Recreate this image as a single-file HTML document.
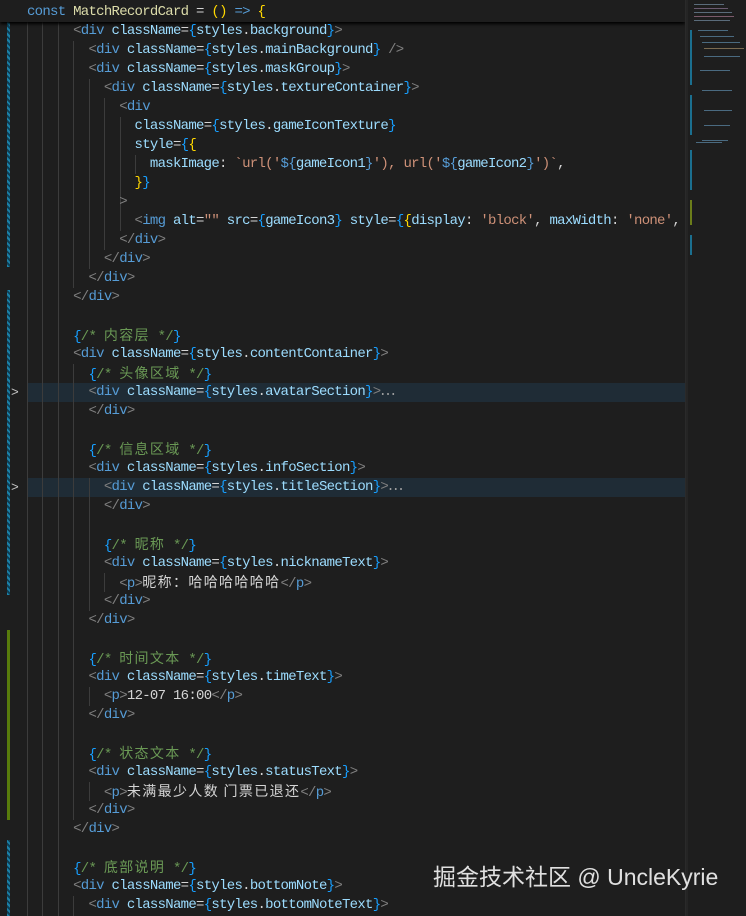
<!DOCTYPE html>
<html><head><meta charset="utf-8"><style>
html,body{margin:0;padding:0}
body{width:746px;height:916px;background:#1e1e1e;position:relative;overflow:hidden;font-family:"Liberation Mono","Noto Sans CJK SC",monospace;font-size:14px;letter-spacing:-0.72px;color:#d4d4d4}
.l{position:absolute;left:27px;height:19px;line-height:19px;white-space:pre}
.hl{position:absolute;left:27px;width:658px;height:19px;background:#1f2c36}
.g{position:absolute;width:1px;background:#3c3c3c}
.cj{letter-spacing:1.36px;font-family:"Noto Sans CJK SC",sans-serif;font-size:14px}
.k,.t{color:#569cd6}.p{color:#808080}.a,.v{color:#9cdcfe}.s{color:#ce9178}.c{color:#6a9955}
.b1{color:#ffd700}.b2{color:#da70d6}.b3{color:#179fff}.f{color:#dcdcaa}
.gut{position:absolute;left:7px;width:3px}
.blue{background:repeating-linear-gradient(45deg,#1b81a8 0 2px,#0e3f55 2px 4px)}
.green{background:#587c0c}
.chev{position:absolute;left:11px;color:#c5c5c5;font-size:13px;letter-spacing:0}
.mm{position:absolute;height:1px}
</style></head><body>
<div class="gut blue" style="top:22px;height:245px"></div>
<div class="gut blue" style="top:290px;height:305px"></div>
<div class="gut green" style="top:630px;height:190px"></div>
<div class="gut blue" style="top:840px;height:76px"></div>
<div class="hl" style="top:383px"></div>
<div class="hl" style="top:478px"></div>
<div class="chev" style="top:383px;line-height:19px">&gt;</div>
<div class="chev" style="top:478px;line-height:19px">&gt;</div>
<div class="g" style="left:27px;top:22px;height:894px"></div>
<div class="g" style="left:42px;top:22px;height:894px"></div>
<div class="g" style="left:58px;top:22px;height:894px"></div>
<div class="g" style="left:73px;top:41px;height:247px"></div>
<div class="g" style="left:73px;top:364px;height:456px"></div>
<div class="g" style="left:73px;top:896px;height:20px"></div>
<div class="g" style="left:89px;top:79px;height:190px"></div>
<div class="g" style="left:89px;top:478px;height:133px"></div>
<div class="g" style="left:89px;top:687px;height:19px"></div>
<div class="g" style="left:89px;top:782px;height:19px"></div>
<div class="g" style="left:104px;top:98px;height:152px"></div>
<div class="g" style="left:104px;top:573px;height:19px"></div>
<div class="g" style="left:120px;top:117px;height:114px"></div>
<div class="g" style="left:135px;top:155px;height:19px"></div>
<div style="position:absolute;left:0;top:0;width:685px;height:22px;background:#1e1e1e;box-shadow:0 2px 3px #000"></div>
<div class="l" style="top:2.5px"><span class="k">const</span> <span class="f">MatchRecordCard</span> = <span class="b1">()</span> <span class="k">=&gt;</span> <span class="b1">{</span></div>

<div class="l" style="top:21.5px">      <span class="p">&lt;</span><span class="t">div</span> <span class="a">className</span>=<span class="b3">{</span><span class="v">styles</span>.<span class="v">background</span><span class="b3">}</span><span class="p">&gt;</span></div>
<div class="l" style="top:40.5px">        <span class="p">&lt;</span><span class="t">div</span> <span class="a">className</span>=<span class="b3">{</span><span class="v">styles</span>.<span class="v">mainBackground</span><span class="b3">}</span> <span class="p">/&gt;</span></div>
<div class="l" style="top:59.5px">        <span class="p">&lt;</span><span class="t">div</span> <span class="a">className</span>=<span class="b3">{</span><span class="v">styles</span>.<span class="v">maskGroup</span><span class="b3">}</span><span class="p">&gt;</span></div>
<div class="l" style="top:78.5px">          <span class="p">&lt;</span><span class="t">div</span> <span class="a">className</span>=<span class="b3">{</span><span class="v">styles</span>.<span class="v">textureContainer</span><span class="b3">}</span><span class="p">&gt;</span></div>
<div class="l" style="top:97.5px">            <span class="p">&lt;</span><span class="t">div</span></div>
<div class="l" style="top:116.5px">              <span class="a">className</span>=<span class="b3">{</span><span class="v">styles</span>.<span class="v">gameIconTexture</span><span class="b3">}</span></div>
<div class="l" style="top:135.5px">              <span class="a">style</span>=<span class="b3">{</span><span class="b1">{</span></div>
<div class="l" style="top:154.5px">                <span class="v">maskImage</span>: <span class="s">`url('</span><span class="k">${</span><span class="v">gameIcon1</span><span class="k">}</span><span class="s">'), url('</span><span class="k">${</span><span class="v">gameIcon2</span><span class="k">}</span><span class="s">')`</span>,</div>
<div class="l" style="top:173.5px">              <span class="b1">}</span><span class="b3">}</span></div>
<div class="l" style="top:192.5px">            <span class="p">&gt;</span></div>
<div class="l" style="top:211.5px">              <span class="p">&lt;</span><span class="t">img</span> <span class="a">alt</span>=<span class="s">""</span> <span class="a">src</span>=<span class="b3">{</span><span class="v">gameIcon3</span><span class="b3">}</span> <span class="a">style</span>=<span class="b3">{</span><span class="b1">{</span><span class="v">display</span>: <span class="s">'block'</span>, <span class="v">maxWidth</span>: <span class="s">'none'</span>,</div>
<div class="l" style="top:230.5px">            <span class="p">&lt;/</span><span class="t">div</span><span class="p">&gt;</span></div>
<div class="l" style="top:249.5px">          <span class="p">&lt;/</span><span class="t">div</span><span class="p">&gt;</span></div>
<div class="l" style="top:268.5px">        <span class="p">&lt;/</span><span class="t">div</span><span class="p">&gt;</span></div>
<div class="l" style="top:287.5px">      <span class="p">&lt;/</span><span class="t">div</span><span class="p">&gt;</span></div>

<div class="l" style="top:325.5px">      <span class="b3">{</span><span class="c">/* <span class="cj">内容层</span> */</span><span class="b3">}</span></div>
<div class="l" style="top:344.5px">      <span class="p">&lt;</span><span class="t">div</span> <span class="a">className</span>=<span class="b3">{</span><span class="v">styles</span>.<span class="v">contentContainer</span><span class="b3">}</span><span class="p">&gt;</span></div>
<div class="l" style="top:363.5px">        <span class="b3">{</span><span class="c">/* <span class="cj">头像区域</span> */</span><span class="b3">}</span></div>
<div class="l" style="top:382.5px">        <span class="p">&lt;</span><span class="t">div</span> <span class="a">className</span>=<span class="b3">{</span><span class="v">styles</span>.<span class="v">avatarSection</span><span class="b3">}</span><span class="p">&gt;</span><span style="color:#aaa">⋯</span></div>
<div class="l" style="top:401.5px">        <span class="p">&lt;/</span><span class="t">div</span><span class="p">&gt;</span></div>

<div class="l" style="top:439.5px">        <span class="b3">{</span><span class="c">/* <span class="cj">信息区域</span> */</span><span class="b3">}</span></div>
<div class="l" style="top:458.5px">        <span class="p">&lt;</span><span class="t">div</span> <span class="a">className</span>=<span class="b3">{</span><span class="v">styles</span>.<span class="v">infoSection</span><span class="b3">}</span><span class="p">&gt;</span></div>
<div class="l" style="top:477.5px">          <span class="p">&lt;</span><span class="t">div</span> <span class="a">className</span>=<span class="b3">{</span><span class="v">styles</span>.<span class="v">titleSection</span><span class="b3">}</span><span class="p">&gt;</span><span style="color:#aaa">⋯</span></div>
<div class="l" style="top:496.5px">          <span class="p">&lt;/</span><span class="t">div</span><span class="p">&gt;</span></div>

<div class="l" style="top:534.5px">          <span class="b3">{</span><span class="c">/* <span class="cj">昵称</span> */</span><span class="b3">}</span></div>
<div class="l" style="top:553.5px">          <span class="p">&lt;</span><span class="t">div</span> <span class="a">className</span>=<span class="b3">{</span><span class="v">styles</span>.<span class="v">nicknameText</span><span class="b3">}</span><span class="p">&gt;</span></div>
<div class="l" style="top:572.5px">            <span class="p">&lt;</span><span class="t">p</span><span class="p">&gt;</span><span class="cj">昵称：哈哈哈哈哈哈</span><span class="p">&lt;/</span><span class="t">p</span><span class="p">&gt;</span></div>
<div class="l" style="top:591.5px">          <span class="p">&lt;/</span><span class="t">div</span><span class="p">&gt;</span></div>
<div class="l" style="top:610.5px">        <span class="p">&lt;/</span><span class="t">div</span><span class="p">&gt;</span></div>

<div class="l" style="top:648.5px">        <span class="b3">{</span><span class="c">/* <span class="cj">时间文本</span> */</span><span class="b3">}</span></div>
<div class="l" style="top:667.5px">        <span class="p">&lt;</span><span class="t">div</span> <span class="a">className</span>=<span class="b3">{</span><span class="v">styles</span>.<span class="v">timeText</span><span class="b3">}</span><span class="p">&gt;</span></div>
<div class="l" style="top:686.5px">          <span class="p">&lt;</span><span class="t">p</span><span class="p">&gt;</span>12-07 16:00<span class="p">&lt;/</span><span class="t">p</span><span class="p">&gt;</span></div>
<div class="l" style="top:705.5px">        <span class="p">&lt;/</span><span class="t">div</span><span class="p">&gt;</span></div>

<div class="l" style="top:743.5px">        <span class="b3">{</span><span class="c">/* <span class="cj">状态文本</span> */</span><span class="b3">}</span></div>
<div class="l" style="top:762.5px">        <span class="p">&lt;</span><span class="t">div</span> <span class="a">className</span>=<span class="b3">{</span><span class="v">styles</span>.<span class="v">statusText</span><span class="b3">}</span><span class="p">&gt;</span></div>
<div class="l" style="top:781.5px">          <span class="p">&lt;</span><span class="t">p</span><span class="p">&gt;</span><span class="cj">未满最少人数 门票已退还</span><span class="p">&lt;/</span><span class="t">p</span><span class="p">&gt;</span></div>
<div class="l" style="top:800.5px">        <span class="p">&lt;/</span><span class="t">div</span><span class="p">&gt;</span></div>
<div class="l" style="top:819.5px">      <span class="p">&lt;/</span><span class="t">div</span><span class="p">&gt;</span></div>

<div class="l" style="top:857.5px">      <span class="b3">{</span><span class="c">/* <span class="cj">底部说明</span> */</span><span class="b3">}</span></div>
<div class="l" style="top:876.5px">      <span class="p">&lt;</span><span class="t">div</span> <span class="a">className</span>=<span class="b3">{</span><span class="v">styles</span>.<span class="v">bottomNote</span><span class="b3">}</span><span class="p">&gt;</span></div>
<div class="l" style="top:895.5px">        <span class="p">&lt;</span><span class="t">div</span> <span class="a">className</span>=<span class="b3">{</span><span class="v">styles</span>.<span class="v">bottomNoteText</span><span class="b3">}</span><span class="p">&gt;</span></div>

<div style="position:absolute;left:685px;top:0;width:61px;height:916px;background:#1e1e1e;border-left:1px solid #2a2a2a"></div>
<div style="position:absolute;left:686px;top:0;width:2px;height:916px;background:#252525"></div>
<div style="position:absolute;left:690px;top:30px;width:2px;height:55px;background:#1b6f8f"></div>
<div style="position:absolute;left:690px;top:95px;width:2px;height:40px;background:#1b6f8f"></div>
<div style="position:absolute;left:690px;top:150px;width:2px;height:40px;background:#1b6f8f"></div>
<div style="position:absolute;left:690px;top:200px;width:2px;height:25px;background:#6b7d1a"></div>
<div style="position:absolute;left:690px;top:235px;width:2px;height:20px;background:#1b6f8f"></div>
<div class="mm" style="left:694px;top:4px;width:30px;background:#5a6b7a"></div>
<div class="mm" style="left:694px;top:8px;width:34px;background:#6a5a70"></div>
<div class="mm" style="left:694px;top:12px;width:38px;background:#5a6b7a"></div>
<div class="mm" style="left:694px;top:16px;width:40px;background:#7a5a6a"></div>
<div class="mm" style="left:694px;top:20px;width:36px;background:#5a6b7a"></div>
<div class="mm" style="left:698px;top:30px;width:30px;background:#4a6a80"></div>
<div class="mm" style="left:700px;top:36px;width:34px;background:#4a6a80"></div>
<div class="mm" style="left:702px;top:42px;width:38px;background:#4a6a80"></div>
<div class="mm" style="left:704px;top:48px;width:40px;background:#7a6a50"></div>
<div class="mm" style="left:704px;top:56px;width:36px;background:#4a6a80"></div>
<div class="mm" style="left:700px;top:70px;width:30px;background:#4a6a80"></div>
<div class="mm" style="left:702px;top:90px;width:30px;background:#4a6a80"></div>
<div class="mm" style="left:704px;top:110px;width:28px;background:#4a6a80"></div>
<div class="mm" style="left:704px;top:125px;width:26px;background:#4a6a80"></div>
<div class="mm" style="left:702px;top:140px;width:26px;background:#4a6a80"></div>
<div class="mm" style="left:696px;top:142px;width:26px;background:#4a6a80"></div>
<div style="position:absolute;left:433px;top:862px;font-family:'Liberation Sans','Noto Sans CJK SC',sans-serif;font-size:23px;letter-spacing:0;color:#e0e0e0;white-space:nowrap;line-height:30px">掘金技术社区 @ UncleKyrie</div>
</body></html>
